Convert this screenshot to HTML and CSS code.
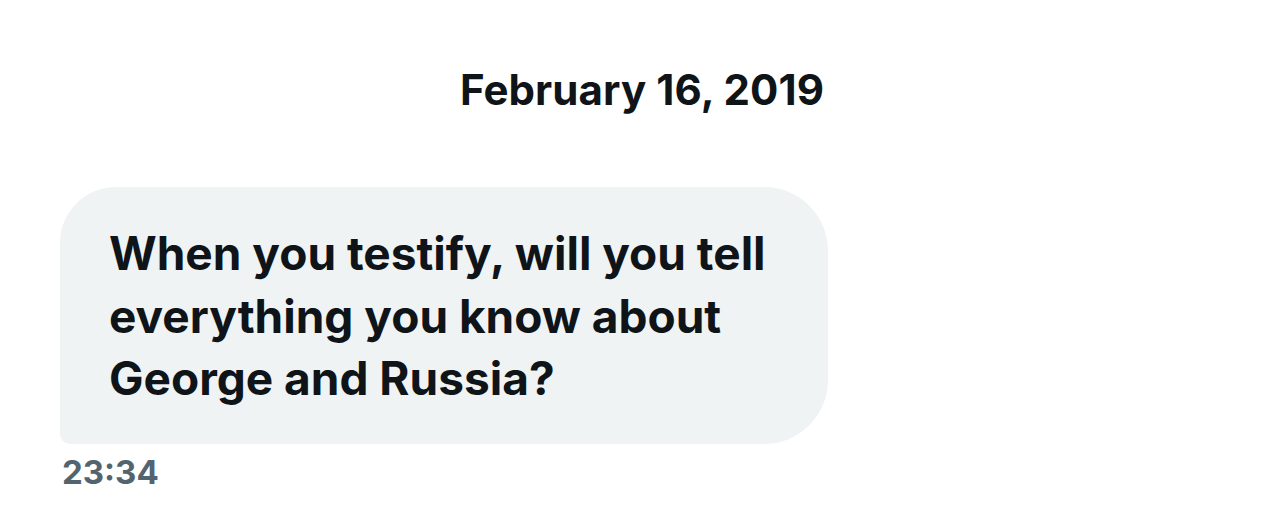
FILE: index.html
```html
<!DOCTYPE html>
<html>
<head>
<meta charset="utf-8">
<link rel="stylesheet" href="styles.css">
</head>
<body>
<div class="thread">
  <div class="date">February 16, 2019</div>
  <div class="message">
    <div class="bubble">When you testify, will you tell everything you know about George and Russia?</div>
    <div class="time">23:34</div>
  </div>
</div>
</body>
</html>
```
FILE: styles.css
```css
html, body {
  margin: 0;
  padding: 0;
  background: #ffffff;
}
body {
  font-family: Inter, "Liberation Sans", sans-serif;
  color: #0f1419;
  width: 1284px;
  height: 507px;
  overflow: hidden;
}
.thread {
  display: flex;
  flex-direction: column;
  padding: 64px 0 0 60px;
}
.date {
  width: 1164px;
  text-align: center;
  font-weight: 700;
  font-size: 42px;
  line-height: 52px;
  color: #0f1419;
  letter-spacing: 0.1px;
}
.message {
  display: flex;
  flex-direction: column;
  align-items: flex-start;
  margin-top: 71px;
}
.bubble {
  box-sizing: border-box;
  width: 768px;
  height: 257px;
  background: #eff3f4;
  border-radius: 56px 64px 64px 10px;
  padding: 35px 40px 0 49px;
  font-weight: 700;
  font-size: 46px;
  line-height: 62.5px;
  color: #0f1419;
}
.time {
  margin-top: 8px;
  font-weight: 700;
  font-size: 33px;
  line-height: 40px;
  color: #536471;
  padding-left: 2px;
}
```
